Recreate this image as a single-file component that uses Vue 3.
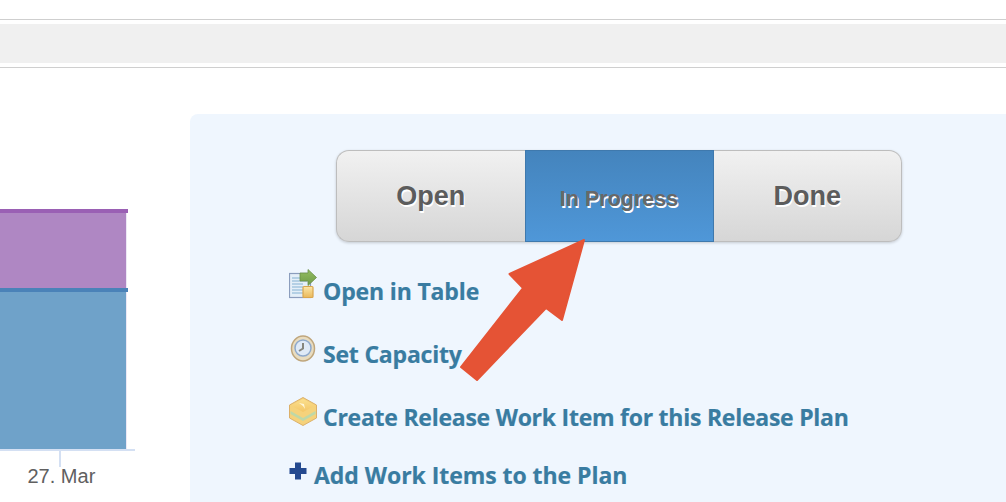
<script setup>
const stages = [
  { label: 'Open', cls: 'open' },
  { label: 'In Progress', cls: 'active' },
  { label: 'Done', cls: 'done' }
]
</script>

<template>
  <div class="page">
    <div class="toolbar"><div class="band"></div></div>
    <main class="content">
      <section class="chart">
        <div class="plot">
          <div class="bar purple"></div>
          <div class="bar blue"></div>
        </div>
        <div class="axis">
          <span class="tick"></span>
          <span class="date">27. Mar</span>
        </div>
      </section>
      <section class="panel">
        <div class="stages">
          <div v-for="s in stages" :key="s.label" class="stage" :class="s.cls"><span>{{ s.label }}</span></div>
        </div>
        <ul class="actions">
          <li class="a1">
            <svg class="ico" width="28" height="30" viewBox="0 0 28 30">
              <defs>
                <linearGradient id="g1" x1="0" y1="0" x2="0" y2="1"><stop offset="0" stop-color="#93bd62"/><stop offset="1" stop-color="#6f9c48"/></linearGradient>
                <linearGradient id="g2" x1="0" y1="0" x2="0" y2="1"><stop offset="0" stop-color="#fbe7a8"/><stop offset="1" stop-color="#eab85a"/></linearGradient>
              </defs>
              <rect x="0.5" y="4.5" width="21" height="24" fill="#e4eff8" stroke="#8b9dbd" stroke-width="1.200"/>
              <path d="M3 9h15M3 12h15M3 15h11M3 18h11M3 21h11M3 24h11" stroke="#a4c6de" stroke-width="1.500"/>
              <path d="M11 4h8V.500L27.500 8.500 19 16.500V12h-8z" fill="url(#g1)" stroke="#6b8f49" stroke-width=".8"/>
              <rect x="14" y="17.500" width="10" height="11" rx="1" fill="url(#g2)" stroke="#d9a64e" stroke-width="1.200"/>
            </svg>
            <a>Open in Table</a>
          </li>
          <li class="a2">
            <svg class="ico" width="28" height="28" viewBox="0 0 28 28">
              <ellipse cx="14" cy="13.500" rx="11.500" ry="12.500" fill="#e8dcc0" stroke="#bfa67c" stroke-width="1.500"/>
              <circle cx="14" cy="13" r="8" fill="#dfeaf7" stroke="#8ea9cc" stroke-width="1.500"/>
              <path d="M14 8v5.500l-4 2.500" fill="none" stroke="#85857d" stroke-width="2"/>
            </svg>
            <a>Set Capacity</a>
          </li>
          <li class="a3">
            <svg class="ico" width="28" height="30" viewBox="0 0 28 30">
              <defs>
                <linearGradient id="g3" x1="0" y1="0" x2="0" y2="1"><stop offset="0" stop-color="#fbe08e"/><stop offset="1" stop-color="#f3c667"/></linearGradient>
              </defs>
              <path d="M14 .500 27.500 8v13L14 28.500.500 21V8z" fill="#f5d27b" stroke="#dcb06a"/>
              <path d="M14 2 26 8.500 14 15 2 8.500z" fill="url(#g3)"/>
              <path d="M1.500 14 14 21l12.500-7v3L14 24 1.500 17z" fill="#bed8a8"/>
              <path d="M10 6l5 1 1 5-2-3z" fill="#fff6d8"/>
            </svg>
            <a>Create Release Work Item for this Release Plan</a>
          </li>
          <li class="a4">
            <svg class="ico" width="18" height="18" viewBox="0 0 18 18">
              <path d="M6 .500h6V6h5.500v6H12v5.500H6V12H.500V6H6z" fill="#24498f"/>
            </svg>
            <a>Add Work Items to the Plan</a>
          </li>
        </ul>
      </section>
    </main>
    <svg class="arrow" width="140" height="160" viewBox="450 230 140 160">
      <path d="M584 240 562 320 546 308 477 380 461 367 523 288 509.500 274z" fill="#e55335" stroke="#e55335" stroke-width="2" stroke-linejoin="round"/>
    </svg>
  </div>
</template>

<style scoped>
.page {
  position: relative;
  width: 1006px;
  height: 502px;
  overflow: hidden;
  background: #fff;
}
.toolbar {
  box-sizing: border-box;
  height: 49px;
  margin-top: 19px;
  padding: 4px 0 3px;
  border-top: 1px solid #cfcfcf;
  border-bottom: 1px solid #cfcfcf;
}
.band {
  height: 39px;
  background: #f0f0f0;
}
.content {
  display: flex;
  padding-top: 46px;
}
.chart {
  flex: 0 0 190px;
  padding-top: 95px;
}
.plot {
  width: 135px;
  height: 240px;
}
.bar {
  box-sizing: border-box;
  width: 126px;
  box-shadow: 1px 0 0 #ece8f5;
}
.bar::before {
  content: '';
  display: block;
  width: 128px;
}
.purple {
  height: 79px;
  background: #af87c3;
}
.purple::before {
  height: 3.500px;
  background: #9a60b4;
}
.blue {
  height: 161px;
  background: #6fa2c9;
}
.blue::before {
  height: 3.500px;
  background: #4a82b8;
}
.axis {
  display: flex;
  flex-direction: column;
  width: 135px;
  border-top: 2px solid #d4e0f3;
}
.tick {
  width: 2px;
  height: 16px;
  margin-left: 59px;
  background: #d4e0f3;
}
.date {
  margin: 0 0 0 27.500px;
  font: 20px/18px "Liberation Sans", Arial, sans-serif;
  color: #606060;
  white-space: nowrap;
}
.panel {
  flex: 1;
  height: 400px;
  padding: 36px 0 0 146px;
  background: #eff6fe;
  border-radius: 8px 0 0 0;
}
.stages {
  display: flex;
  box-sizing: border-box;
  width: 566px;
  height: 92px;
  border-radius: 13px;
  box-shadow: 0 1px 3px rgba(0, 0, 0, .18);
  font-family: "Liberation Sans", Arial, sans-serif;
  font-weight: 700;
  color: #5c5c5c;
  text-shadow: 1px 2px 0 #fff;
}
.stage {
  box-sizing: border-box;
  flex: 1;
  display: flex;
  align-items: center;
  justify-content: center;
  background: linear-gradient(#f1f1f1, #d6d6d6);
  border: 1px solid #bdbdbd;
  font-size: 27px;
}
.open {
  border-right: 0;
  border-radius: 13px 0 0 13px;
}
.done {
  border-left: 0;
  border-radius: 0 13px 13px 0;
}
.active {
  flex: 0 0 189px;
  background: linear-gradient(#4484bd, #4f97d8);
  border-color: #3f79ad;
  font-size: 21.500px;
  padding-top: 7px;
  color: #686868;
}
.actions {
  list-style: none;
  margin: 0 0 0 -47px;
  padding: 27px 0 0 0;
  font: 700 23px/30px "Open Sans", sans-serif;
  color: #397ca1;
  -webkit-text-stroke: 0.2px #397ca1;
}
.actions li {
  display: flex;
  align-items: flex-start;
  white-space: nowrap;
}
.ico { flex: none; }
.actions a {
  margin-top: 7px;
  margin-left: 6px;
}
.a1 { height: 63px; letter-spacing: -0.15px; }
.a2 { height: 63px; letter-spacing: -0.2px; }
.a3 { height: 58px; letter-spacing: -0.25px; }
.a4 { letter-spacing: -0.05px; }
.a2 .ico { margin-top: 3px; }
.a3 .ico { margin-top: 2px; }
.a4 .ico { margin-top: 9px; }
.a4 a { margin-left: 7px; }
.arrow {
  position: absolute;
  left: 450px;
  top: 230px;
}
</style>
